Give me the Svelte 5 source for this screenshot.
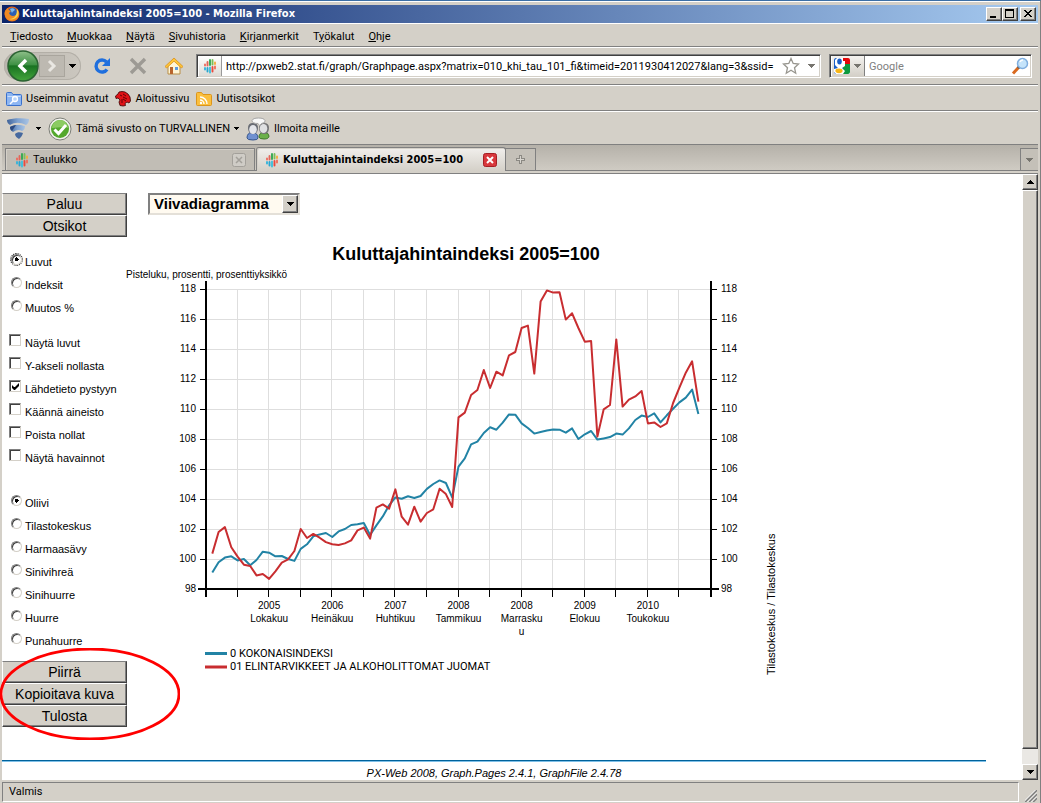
<script>
  const menus = ['Tiedosto', 'Muokkaa', 'Näytä', 'Sivuhistoria', 'Kirjanmerkit', 'Työkalut', 'Ohje'];
  const accessAt = { Työkalut: 1 };

  const views = ['Luvut', 'Indeksit', 'Muutos %'];
  const options = ['Näytä luvut', 'Y-akseli nollasta', 'Lähdetieto pystyyn', 'Käännä aineisto', 'Poista nollat', 'Näytä havainnot'];
  const themes = ['Oliivi', 'Tilastokeskus', 'Harmaasävy', 'Sinivihreä', 'Sinihuurre', 'Huurre', 'Punahuurre'];
  let view = $state('Luvut');
  let theme = $state('Oliivi');
  let chosen = $state(['Lähdetieto pystyyn']);

  const total = [99.09, 99.78, 100.09, 100.18, 99.91, 100, 99.58, 99.93, 100.49, 100.42, 100.18, 100.2, 100, 99.87, 100.67, 100.98, 101.51, 101.64, 101.73, 101.47, 101.84, 102, 102.27, 102.31, 102.4, 101.6, 102.24, 102.84, 103.58, 104.11, 104.02, 104.18, 104.07, 104.2, 104.67, 105, 105.24, 105.07, 104.11, 106.16, 106.71, 107.64, 107.82, 108.4, 108.78, 108.62, 109.09, 109.64, 109.62, 109.04, 108.73, 108.36, 108.47, 108.56, 108.64, 108.62, 108.42, 108.71, 108, 108.31, 108.53, 107.96, 108.04, 108.13, 108.36, 108.29, 108.71, 109.27, 109.56, 109.47, 109.71, 109.11, 109.58, 110.02, 110.44, 110.76, 111.29, 109.67];
  const food = [100.36, 101.8, 102.13, 100.78, 100.16, 99.62, 99.53, 98.91, 99, 98.67, 99.18, 99.76, 99.98, 100.53, 102, 101.4, 101.67, 101.42, 101.13, 100.98, 100.93, 101.04, 101.24, 101.91, 102.09, 101.36, 103.42, 103.64, 103.36, 104.64, 102.82, 102.29, 103.49, 102.49, 103.07, 103.31, 104.69, 104.33, 103.47, 109.44, 109.76, 110.93, 111.27, 112.6, 111.4, 112.49, 112.24, 113.58, 113.8, 115.4, 115.56, 112.36, 117.16, 117.91, 117.76, 117.78, 115.96, 116.38, 115.4, 114.49, 114.53, 108.16, 109.98, 110.27, 114.64, 110.16, 110.62, 110.84, 111.2, 109.04, 109.11, 108.8, 109.04, 110.4, 111.42, 112.42, 113.18, 110.49];

  const left = 80;
  const right = 585;
  const bottom = 351;
  const px = (month) => left + (month * (right - left)) / 80;
  const py = (value) => bottom - (value - 98) * 15;
  const line = (data) => data.map((v, i) => `${px(i + 1).toFixed(1)},${py(v).toFixed(1)}`).join(' ');
  const yTicks = Array.from({ length: 11 }, (_, i) => 98 + i * 2);
  const xTicks = Array.from({ length: 17 }, (_, i) => i * 5);
  const xLabels = [
    [10, '2005', 'Lokakuu'], [20, '2006', 'Heinäkuu'], [30, '2007', 'Huhtikuu'], [40, '2008', 'Tammikuu'],
    [50, '2008', 'Marrasku', 'u'], [60, '2009', 'Elokuu'], [70, '2010', 'Toukokuu']
  ];
</script>

{#snippet statIcon()}
  <svg class="i16" viewBox="0 0 16 16" aria-hidden="true">
    <g fill="none" stroke-width="1.900" stroke-linecap="round">
      <path d="M3 6.500v1" stroke="#ee6a5e" /><path d="M5.500 4v3.500" stroke="#e2665a" />
      <path d="M8 2v5" stroke="#35a853" /><path d="M10.500 2v4.500" stroke="#7cbf5a" /><path d="M13 4.500v1.500" stroke="#f3ad3e" />
      <path d="M3 10v1.500" stroke="#35b4dc" /><path d="M5.500 10v3.500" stroke="#2aa6cf" />
      <path d="M8 9.500v5" stroke="#3fc0dc" /><path d="M10.500 9v4.500" stroke="#ea4a3f" /><path d="M13 8.500v2" stroke="#f0705c" />
    </g>
  </svg>
{/snippet}

{#snippet caret(color)}
  <svg class="caret" viewBox="0 0 7 4" shape-rendering="crispEdges" aria-hidden="true"><path d="M0 0h7L3.5 4z" fill={color} /></svg>
{/snippet}

<div class="window">
  <header class="titlebar">
    <svg class="i16" viewBox="0 0 16 16" aria-hidden="true">
      <circle cx="8" cy="8" r="7.5" fill="#e2661b" />
      <circle cx="8.5" cy="7" r="5.2" fill="#2b5fb4" />
      <path d="M6 3c2-1 4-1 5 1-1 1-2 1-3 3z" fill="#7cb9ec" />
      <path d="M1 5c1-1 2-3 3-3 0 2 1 2 3 3L5 7c1 3 4 4 7 2 2-1 1-4 0-6 3 2 4 6 2 9-3 4-9 4-12 0C1 10 0 7 1 5z" fill="#ef8a22" />
      <path d="M13 3c2 2 2 6 0 8-2 2-5 3-8 2 6 0 8-4 8-10z" fill="#fbd34b" />
    </svg>
    <h1>Kuluttajahintaindeksi 2005=100 - Mozilla Firefox</h1>
    <div class="wbtns">
      <button aria-label="Pienennä"><svg viewBox="0 0 12 10" shape-rendering="crispEdges"><path d="M2 7h6v2H2z" /></svg></button>
      <button aria-label="Suurenna"><svg viewBox="0 0 12 10" shape-rendering="crispEdges"><path fill-rule="evenodd" d="M1 0h9v9H1zM2 2v6h7V2z" /></svg></button>
      <button class="close" aria-label="Sulje"><svg viewBox="0 0 12 10" shape-rendering="crispEdges"><path d="M2 1h2v1h1v1h2V2h1V1h2v1H9v1H8v1H7v1h1v1h1v1h1v1H8V7H7V6H5v1H4v1H2V7h1V6h1V5h1V4H4V3H3V2H2z" /></svg></button>
    </div>
  </header>

  <nav class="menubar">
    {#each menus as m}
      {@const k = accessAt[m] ?? 0}
      <button>{m.slice(0, k)}<u>{m[k]}</u>{m.slice(k + 1)}</button>
    {/each}
  </nav>

  <div class="bar navbar">
    <div class="pill">
      <button class="back" aria-label="Takaisin">
        <svg viewBox="0 0 32 32">
          <defs>
            <linearGradient id="green" x1="0" y1="0" x2="0" y2="1">
              <stop offset="0" stop-color="#8fc08a" /><stop offset=".45" stop-color="#3f9145" /><stop offset=".5" stop-color="#197322" /><stop offset="1" stop-color="#44a53c" />
            </linearGradient>
          </defs>
          <circle cx="16" cy="16" r="15" fill="url(#green)" stroke="#2a6231" stroke-width="1.500" />
          <path d="M19 10l-6 6 6 6" fill="none" stroke="#fff" stroke-width="3.500" />
        </svg>
      </button>
      <button class="fwd" aria-label="Seuraava"><svg viewBox="0 0 12 14"><path d="M3 2l5 5-5 5" fill="none" stroke="#e9e7e2" stroke-width="3" /></svg></button>
      <button class="drop" aria-label="Historia">{@render caret('#000')}</button>
    </div>
    <button class="tool" aria-label="Päivitä">
      <svg viewBox="0 0 18 18"><path d="M14 12.500A6 6 0 1 1 13.500 5" fill="none" stroke="#1f6fde" stroke-width="3.400" /><path d="M17 1v8H9z" fill="#1f6fde" /></svg>
    </button>
    <button class="tool" aria-label="Pysäytä">
      <svg viewBox="0 0 18 18"><path d="M2 2l14 14M16 2L2 16" fill="none" stroke="#9d9a94" stroke-width="3.400" /></svg>
    </button>
    <button class="tool" aria-label="Koti">
      <svg viewBox="0 0 18 18">
        <path d="M3 9v8h12V9L9 3z" fill="#fff5d5" stroke="#b98d45" />
        <path d="M9 1L0 9.500l1.500 1.500L9 4.200l7.500 6.800L18 9.500z" fill="#ffc738" stroke="#d98e1c" stroke-width=".8" />
        <path d="M5 10h3v7H5z" fill="#b8642c" /><path d="M10 10h3v3h-3z" fill="#5a9be0" />
      </svg>
    </button>
    <div class="field url">
      <span class="fav">{@render statIcon()}</span>
      <input aria-label="Osoite" value="http://pxweb2.stat.fi/graph/Graphpage.aspx?matrix=010_khi_tau_101_fi&timeid=2011930412027&lang=3&ssid=" />
      <svg class="star" viewBox="0 0 18 18" aria-hidden="true"><path d="M9 1.500l2.200 5 5.300.5-4 3.700 1.200 5.500L9 13.300l-4.700 2.900 1.200-5.500-4-3.700 5.300-.5z" fill="#fff" stroke="#98968f" stroke-width="1.300" /></svg>
      <button class="plain" aria-label="Näytä osoitteet">{@render caret('#77756f')}</button>
    </div>
    <div class="field search">
      <button class="engine" aria-label="Hakukone">
        <svg class="i16" viewBox="0 0 16 16" aria-hidden="true">
          <path d="M0 0h16v16H0z" fill="#fff" />
          <path d="M9 0h5q2 0 2 2v4H9z" fill="#e4080a" />
          <path d="M8 6h8v8q0 2-2 2H9z" fill="#0c9a3f" />
          <path d="M0 2q0-2 2-2h7v16H2q-2 0-2-2z" fill="#1b5fc6" />
          <path d="M3 0h6v3h2v5l-3 2 3 3-2 3H2l-2-2v-3l4-1-3-3 0-5z" fill="#fff" />
          <ellipse cx="5.500" cy="3.500" rx="2.300" ry="3" fill="#1b5fc6" />
          <ellipse cx="5" cy="12.800" rx="3.600" ry="2.400" fill="#f7b516" />
        </svg>
        {@render caret('#77756f')}
      </button>
      <input aria-label="Haku" placeholder="Google" />
      <svg class="lens" viewBox="0 0 18 18" aria-hidden="true">
        <path d="M7.500 10.500L2 16.500" stroke="#d9691e" stroke-width="3" /><path d="M7 11l1.500-1.500" stroke="#555" stroke-width="3" />
        <circle cx="11.500" cy="6.500" r="5" fill="#c5e4fb" stroke="#7faedf" stroke-width="1.500" /><path d="M9 5a3 3 0 0 1 3-2" stroke="#fff" fill="none" stroke-width="1.500" />
      </svg>
    </div>
  </div>

  <div class="bar bookmarks">
    <a href="#avatut">
      <svg class="i16" viewBox="0 0 16 16" aria-hidden="true"><path d="M.5 2.500q0-1 1-1h4l1.500 2h7.500q1 0 1 1v9q0 1-1 1h-13q-1 0-1-1z" fill="#8db6f2" stroke="#3a71cc" /><path d="M1.500 5.500h13" stroke="#c7dcfa" /><circle cx="9" cy="8" r="2.500" fill="#b9d4fa" stroke="#fff" stroke-width="1.300" /><path d="M7 10l-3 3" stroke="#fff" stroke-width="1.500" /></svg>
      Useimmin avatut</a>
    <a href="#aloitus">
      <svg class="i16" viewBox="0 0 16 16" aria-hidden="true"><path d="M.5 5L3 3l1-2 3-.5 3 .5 3 2 2 3 .5 4-1.500 2-2-1-2 1.500.5 2L8 15l-3-.5L4 11l1-2-2-2-2 .5z" fill="#e01216" stroke="#3a0303" stroke-width=".8" /><path d="M5 4l2 1M8 3l3 2M8 6l4 2M8 8l3 2M7 8v4" stroke="#400" stroke-width=".8" /></svg>
      Aloitussivu</a>
    <a href="#uutiset">
      <svg class="i16" viewBox="0 0 16 16" aria-hidden="true"><path d="M.5 2.500q0-1 1-1h4l1.500 2h7.500q1 0 1 1v9q0 1-1 1h-13q-1 0-1-1z" fill="#fbbf3d" stroke="#dc951b" /><circle cx="5" cy="12" r="1.200" fill="#fff" /><path d="M4 9a4 4 0 0 1 4 4M4 6a7 7 0 0 1 7 7" fill="none" stroke="#fff" stroke-width="1.400" /></svg>
      Uutisotsikot</a>
  </div>

  <div class="bar security">
    <button class="rating" aria-label="Suojaus">
      <svg class="i24" viewBox="0 0 24 24" aria-hidden="true">
        <defs><linearGradient id="steel"><stop offset="0" stop-color="#3f6298" /><stop offset=".5" stop-color="#7fa3d2" /><stop offset="1" stop-color="#a9c3e2" /></linearGradient></defs>
        <path d="M1 3c6-2 15-2 22-1 0 3-1 5-3 6C14 5 9 5 4 8 2 7 1 5 1 3z" fill="url(#steel)" />
        <path d="M4 10c5-3 11-2 15-1 0 3-1 4-3 5-3-2-6-1-9 1-2-1-3-3-3-5z" fill="url(#steel)" />
        <path d="M9 17c2-2 5-2 8-1-1 3-2 4-4 6-2-1-4-3-4-5z" fill="#46699f" />
        <path d="M4 10c2-1 4-2 6-2l-4 6c-1-1-2-2-2-4z" fill="#2b4a80" />
      </svg>
      {@render caret('#000')}
    </button>
    <button>
      <svg class="i24" viewBox="0 0 24 24" aria-hidden="true"><circle cx="12" cy="12" r="11" fill="#f1f1ed" stroke="#7d7f78" /><circle cx="12" cy="12" r="9" fill="#53a82d" /><path d="M4 11a8 8 0 0 1 16 0c-5-2-10 0-16 0z" fill="#8bcb62" /><path d="M6.500 12.500l4 4L18 8" fill="none" stroke="#fff" stroke-width="3" /></svg>
      Tämä sivusto on TURVALLINEN {@render caret('#000')}
    </button>
    <button>
      <svg class="i24" viewBox="0 0 24 24" aria-hidden="true">
        <path d="M1 21q0-5 5-6 6 1 6 6 0 2-5 2-6 0-6-2z" fill="#6f90d0" stroke="#36558c" />
        <path d="M2 11q0-5 5-5t5 5q0 5-4 6H6q-4-1-4-6z" fill="#6a6d75" /><ellipse cx="7" cy="12.500" rx="3.800" ry="4.500" fill="#e3e5ea" />
        <path d="M13 20q0-4 5-5 5 1 5 4 0 3-5 3t-5-2z" fill="#6bb04a" stroke="#3f7a2a" />
        <path d="M13 11q0-5 5-5t5 5q0 5-4 6h-2q-4-1-4-6z" fill="#747476" /><ellipse cx="17.500" cy="11.500" rx="3.800" ry="4.500" fill="#dfe0e2" />
        <path d="M6 3.500Q7 1 12.500 1T19 3.500t-3.500 3l-2 2-1.500-2Q6 6.500 6 3.500z" fill="#f8f8f8" stroke="#a5a5a5" />
      </svg>
      Ilmoita meille
    </button>
  </div>

  <div class="tabs">
    <div class="tab">
      {@render statIcon()}<span>Taulukko</span>
      <button class="x" aria-label="Sulje Taulukko"><svg viewBox="0 0 14 14"><rect x=".5" y=".5" width="13" height="13" rx="2" fill="#cfccc6" stroke="#a3a09a" /><path d="M4 4l6 6M10 4l-6 6" stroke="#a3a09a" stroke-width="1.500" /></svg></button>
    </div>
    <div class="tab active">
      {@render statIcon()}<span>Kuluttajahintaindeksi 2005=100</span>
      <button class="x" aria-label="Sulje välilehti"><svg viewBox="0 0 14 14"><rect x=".5" y=".5" width="13" height="13" rx="2" fill="#d8383c" stroke="#a51f25" /><path d="M4 4l6 6M10 4l-6 6" stroke="#fff" stroke-width="2" /></svg></button>
    </div>
    <button class="newtab" aria-label="Uusi välilehti"><svg viewBox="0 0 9 9" shape-rendering="crispEdges"><path d="M3 0h3v3h3v3H6v3H3V6H0V3h3z" fill="#8b8983" /><path d="M4 1h1v3h3v1H5v3H4V5H1V4h3z" fill="#d8d5cf" /></svg></button>
    <button class="alltabs" aria-label="Kaikki välilehdet">{@render caret('#77756f')}</button>
  </div>

  <div class="viewport">
    <div class="page">
      <div class="columns">
        <aside>
          <div class="btns"><button>Paluu</button><button>Otsikot</button></div>
          <fieldset class="g1">
            {#each views as v}
              <label><input type="radio" name="view" value={v} bind:group={view} class:focus={v === view} />{v}</label>
            {/each}
          </fieldset>
          <fieldset class="g2">
            {#each options as o}
              <label><input type="checkbox" value={o} bind:group={chosen} />{o}</label>
            {/each}
          </fieldset>
          <fieldset class="g3">
            {#each themes as t}
              <label><input type="radio" name="theme" value={t} bind:group={theme} />{t}</label>
            {/each}
          </fieldset>
          <div class="btns">
            <button>Piirrä</button><button>Kopioitava kuva</button><button>Tulosta</button>
            <svg class="ring" viewBox="0 0 181 92" aria-hidden="true"><ellipse cx="91" cy="46" rx="89" ry="45" fill="none" stroke="#f00" stroke-width="2.800" /></svg>
          </div>
        </aside>

        <main>
          <div class="pick">
            <select aria-label="Kaavion tyyppi"><option>Viivadiagramma</option></select>
            <span class="arrow">{@render caret('#000')}</span>
          </div>
          <svg class="chart" viewBox="0 0 860 450" role="img" aria-label="Kuluttajahintaindeksi 2005=100">
            <text class="title" x="340" y="22">Kuluttajahintaindeksi 2005=100</text>
            <text x="0" y="40">Pisteluku, prosentti, prosenttiyksikkö</text>
            <g class="grid">
              {#each yTicks.slice(1) as v}<path d="M{left} {py(v) + 0.5}H{right}" />{/each}
              {#each xTicks.slice(1, -1) as t}<path d="M{Math.round(px(t)) - 0.5} {py(118)}V{bottom}" />{/each}
            </g>
            <polyline points={line(total)} stroke="#2283a5" />
            <polyline points={line(food)} stroke="#c82d30" />
            <g class="ticks">
              {#each yTicks.slice(1) as v}
                <path d="M{left - 6} {py(v) + 0.5}h6M{right} {py(v) + 0.5}h6" />
              {/each}
              {#each xTicks as t}<path d="M{Math.round(px(t)) - 0.5} {bottom}v8" />{/each}
            </g>
            <path class="axes" d="M{left} 43V{bottom + 8}M{right} 43V{bottom + 8}M{left - 8} {bottom}H{right + 8}" />
            {#each yTicks as v}
              <text class="end" x="70" y={py(v) + 3}>{v}</text>
              <text x="595" y={py(v) + 3}>{v}</text>
            {/each}
            {#each xLabels as [m, ...rows]}
              {#each rows as r, i}<text class="mid" x={px(m)} y={371 + i * 13}>{r}</text>{/each}
            {/each}
            <path d="M79 415.500h22" stroke="#2283a5" stroke-width="3" />
            <path d="M79 429h22" stroke="#c82d30" stroke-width="3" />
            <text class="key" x="104" y="419">0 KOKONAISINDEKSI</text>
            <text class="key" x="104" y="432">01 ELINTARVIKKEET JA ALKOHOLITTOMAT JUOMAT</text>
            <text class="source" transform="translate(649 437) rotate(-90)">Tilastokeskus / Tilastokeskus</text>
          </svg>
        </main>
      </div>
      <footer>PX-Web 2008, Graph.Pages 2.4.1, GraphFile 2.4.78</footer>
    </div>
    <div class="scroll">
      <button aria-label="Ylös"><svg viewBox="0 0 7 4" shape-rendering="crispEdges"><path d="M3 0h1v1h1v1h1v1h1v1H0V3h1V2h1V1h1z" /></svg></button>
      <div class="thumb"></div>
      <div class="track"></div>
      <button aria-label="Alas"><svg viewBox="0 0 7 4" shape-rendering="crispEdges"><path d="M0 0h7v1H6v1H5v1H4v1H3V3H2V2H1V1H0z" /></svg></button>
    </div>
  </div>

  <div class="status">
    <span>Valmis</span>
    <svg viewBox="0 0 12 12" aria-hidden="true"><path d="M0 12L12 0M4 12l8-8M8 12l4-4" stroke="#808080" stroke-width="1.800" /><path d="M-1.500 12L12-1.500M2.500 12L12 2.500M6.500 12L12 6.500" stroke="#fff" /></svg>
  </div>
</div>

<style>
  :global(body) { margin: 0; }
  .window {
    box-sizing: border-box;
    height: 100vh;
    min-height: 640px;
    display: flex;
    flex-direction: column;
    padding: 3px 2px 0 2px;
    background: #d4d0c8;
    border-top: 1px solid #3a6ea5;
    border-right: 1px solid #808080;
    box-shadow: inset 0 1px #fff;
    font: 11px/14px Roboto, "DejaVu Sans Condensed", sans-serif;
    color: #000;
  }
  button { font: inherit; color: inherit; margin: 0; padding: 0; border: 0; background: none; }
  input, select { font: inherit; margin: 0; padding: 0; border: 0; border-radius: 0; }
  svg { display: block; flex: none; }
  .i16 { width: 16px; height: 16px; }
  .i24 { width: 24px; height: 24px; }
  .caret { width: 7px; height: 4px; }

  .titlebar {
    height: 18px;
    display: flex;
    align-items: center;
    gap: 2px;
    margin-top: 1px;
    padding: 0 2px;
    background: linear-gradient(90deg, #0a246a, #a6caf0);
    color: #fff;
  }
  h1 { flex: 1; margin: 0; font: bold 11px/18px "DejaVu Sans Condensed", "DejaVu Sans", sans-serif; white-space: nowrap; }
  .wbtns { display: flex; }
  .wbtns button, .scroll button, .arrow, .thumb {
    box-sizing: border-box;
    background: #d4d0c8;
    border: 1px solid;
    border-color: #fff #404040 #404040 #fff;
    box-shadow: inset -1px -1px #808080;
    display: flex;
    align-items: center;
    justify-content: center;
  }
  .wbtns button { width: 16px; height: 14px; }
  .wbtns .close { margin-left: 2px; }
  .wbtns svg { width: 12px; height: 10px; }

  .menubar { display: flex; gap: 14px; height: 19px; align-items: center; padding: 3px 8px 0; border-top: 1px solid #fff; border-bottom: 1px solid #808080; }
  .bar { display: flex; align-items: center; border-top: 1px solid #fff; border-bottom: 1px solid #808080; }

  .navbar { height: 36px; padding: 0 6px 0 2px; }
  .pill { display: flex; align-items: center; height: 28px; border-radius: 14px; background: linear-gradient(90deg, #b9b5ae, #cbc7bf); box-shadow: inset 0 0 0 1px #b3afa7; }
  .back { margin-left: 3px; }
  .back svg { width: 32px; height: 32px; }
  .fwd { display: flex; align-items: center; justify-content: center; width: 26px; height: 22px; background: #bdb9b1; box-shadow: inset 0 0 0 1px #a9a59d; }
  .fwd svg { width: 12px; height: 14px; }
  .drop { width: 16px; padding-left: 4px; }
  .tool { margin-left: 18px; }
  .pill + .tool { margin-left: 12px; }
  .tool svg { width: 18px; height: 18px; }
  .field {
    box-sizing: border-box;
    display: flex;
    align-items: center;
    height: 24px;
    background: #fff;
    border: 1px solid;
    border-color: #808080 #fff #fff #808080;
    box-shadow: inset 1px 1px #404040, inset -1px -1px #d4d0c8;
    padding: 2px;
  }
  .field input { flex: 1; min-width: 0; background: none; outline: 0; height: 18px; }
  .url { flex: 1; min-width: 0; margin-left: 13px; }
  .fav { display: flex; align-items: center; justify-content: center; width: 22px; height: 20px; border-right: 1px solid #999; background: linear-gradient(#fff, #dedbd5); margin-right: 4px; }
  .star { width: 18px; height: 18px; margin-left: 4px; }
  .url .plain { padding: 0 3px 0 8px; }
  .search { width: 203px; margin-left: 8px; }
  .engine { display: flex; align-items: center; gap: 4px; height: 20px; padding: 0 3px 0 2px; border-right: 1px solid #808080; background: linear-gradient(#f4f2ef, #d4d0c8); margin-right: 4px; }
  .search input::placeholder { color: #808080; opacity: 1; }
  .lens { width: 18px; height: 18px; }

  .bookmarks { height: 23px; gap: 7px; padding: 1px 4px 0; }
  .bookmarks a { display: flex; align-items: center; gap: 4px; color: #000; text-decoration: none; }
  .security { height: 31px; padding: 1px 4px 0; gap: 7px; }
  .security button { display: flex; align-items: center; gap: 4px; }
  .security .rating { gap: 6px; }
  .security .caret { width: 5px; height: 3px; }

  .tabs { display: flex; align-items: flex-end; height: 25px; padding-left: 3px; gap: 1px; background: linear-gradient(#b5b1a9, #cfcbc3); border-bottom: 1px solid #808080; box-shadow: 0 2px #d4d0c8, 0 3px #808080; margin-bottom: 3px; }
  .tab { box-sizing: border-box; display: flex; align-items: center; flex: 0 1 250px; min-width: 0; height: 22px; padding: 0 8px; gap: 3px; border: 1px solid #808080; border-bottom: 0; background: #c1bdb5; box-shadow: inset 1px 1px #d4d0c8; }
  .tab span { flex: 1; white-space: nowrap; overflow: hidden; }
  .active { height: 24px; margin-bottom: -1px; padding-left: 7px; font-family: "DejaVu Sans Condensed", "DejaVu Sans", sans-serif; font-weight: bold; background: linear-gradient(#f1efec, #d4d0c8); border-radius: 3px 3px 0 0; }
  .x, .x svg { width: 14px; height: 14px; }
  .newtab, .alltabs { display: flex; align-items: center; justify-content: center; box-sizing: border-box; height: 22px; border: 1px solid #808080; border-bottom: 0; background: #c4c0b8; }
  .newtab { width: 31px; margin-left: -2px; }
  .newtab svg { width: 9px; height: 9px; }
  .alltabs { width: 18px; margin-left: auto; border-right: 0; }

  .viewport { flex: 1; min-height: 0; display: flex; background: #fff; overflow: clip; overflow-clip-margin: 2px; }
  .page { flex: 1; min-width: 0; padding: 19px 36px 0 0; font-family: "Liberation Sans", Arial, sans-serif; }
  .columns { display: flex; align-items: flex-start; }
  aside { flex: none; width: 124px; }
  .btns { display: flex; flex-direction: column; width: 125px; position: relative; z-index: 1; }
  .btns button { box-sizing: border-box; height: 22px; font-size: 14px; line-height: 18px; background: #d4d0c8; border: 1px solid; border-color: #fff #404040 #404040 #fff; box-shadow: inset -1px -1px #808080; }
  .btns button:first-child { border-top-color: #808080; }
  .ring { position: absolute; left: -3px; top: -13px; width: 181px; height: 92px; pointer-events: none; }
  fieldset { margin: 0; padding: 0 0 0 7px; border: 0; }
  .g1 { margin-top: 13px; }
  .g2 { margin-top: 12px; }
  .g3 { margin-top: 22px; margin-bottom: 9px; }
  label { display: flex; align-items: center; gap: 4px; height: 23px; white-space: nowrap; }
  label input { appearance: none; box-sizing: border-box; width: 12px; height: 12px; flex: none; margin-bottom: 5px; border: 1px solid; border-color: #808080 #d4d0c8 #d4d0c8 #808080; background: #fff; box-shadow: inset 1px 1px #404040; }
  input[type='radio'] { border-radius: 50%; margin-left: 2px; width: 11px; height: 11px; margin-right: -1px; }
  input[type='radio']:checked { background: radial-gradient(circle at 50% 50%, #000 0 2px, #fff 2px); }
  input[type='checkbox']:checked::before { content: ''; display: block; width: 7px; height: 7px; margin: 2px; background: #000; clip-path: polygon(0 2px, 2px 4px, 3px 4px, 7px 0, 7px 3px, 3px 7px, 2px 7px, 0 5px); }
  .focus { outline: 1px dotted #000; }

  main { flex: 1; min-width: 0; }
  .pick { display: flex; align-items: center; width: 152px; height: 22px; margin: 0 0 23px 22px; box-sizing: border-box; background: #fffaf0; border: 2px solid; border-color: #808080 #e4e0d8 #e4e0d8 #808080; }
  .pick select { appearance: none; flex: 1; min-width: 0; height: 18px; padding-left: 4px; background: none; font-size: 15px; font-weight: bold; line-height: 18px; color: #000; }
  .arrow { width: 16px; height: 18px; pointer-events: none; }
  .chart { width: 100%; max-width: 860px; height: auto; }
  .chart text { font-size: 10px; fill: #000; }
  .chart .title { font-size: 18px; font-weight: bold; text-anchor: middle; }
  .chart .end { text-anchor: end; }
  .chart .mid { text-anchor: middle; }
  .chart .key { font-family: Roboto, "Liberation Sans", sans-serif; font-size: 11px; }
  .chart .source { font-size: 11px; }
  .grid path { stroke: #dedede; stroke-width: 1; }
  .ticks path { stroke: #000; stroke-width: 1; fill: none; }
  .axes { stroke: #000; stroke-width: 2; fill: none; }
  polyline { fill: none; stroke-width: 2; stroke-linejoin: round; }
  footer { margin-top: 33px; border-top: 1px solid #00629b; box-shadow: inset 0 1px #7fc0e8; padding-top: 5px; text-align: center; font-size: 11px; font-style: italic; line-height: 14px; }

  .scroll { flex: none; width: 16px; display: flex; flex-direction: column; background: #eae8e4; }
  .scroll button { width: 16px; height: 16px; }
  .scroll svg { width: 7px; height: 4px; }
  .thumb { flex: 1; }
  .track { height: 15px; }

  .status { flex: none; display: flex; align-items: flex-end; gap: 6px; height: 23px; padding: 2px 1px 1px 0; box-sizing: border-box; }
  .status span { flex: 1; box-sizing: border-box; height: 20px; line-height: 18px; padding-left: 6px; border: 1px solid; border-color: #808080 #fff #fff #808080; }
  .status svg { width: 12px; height: 12px; }
</style>
